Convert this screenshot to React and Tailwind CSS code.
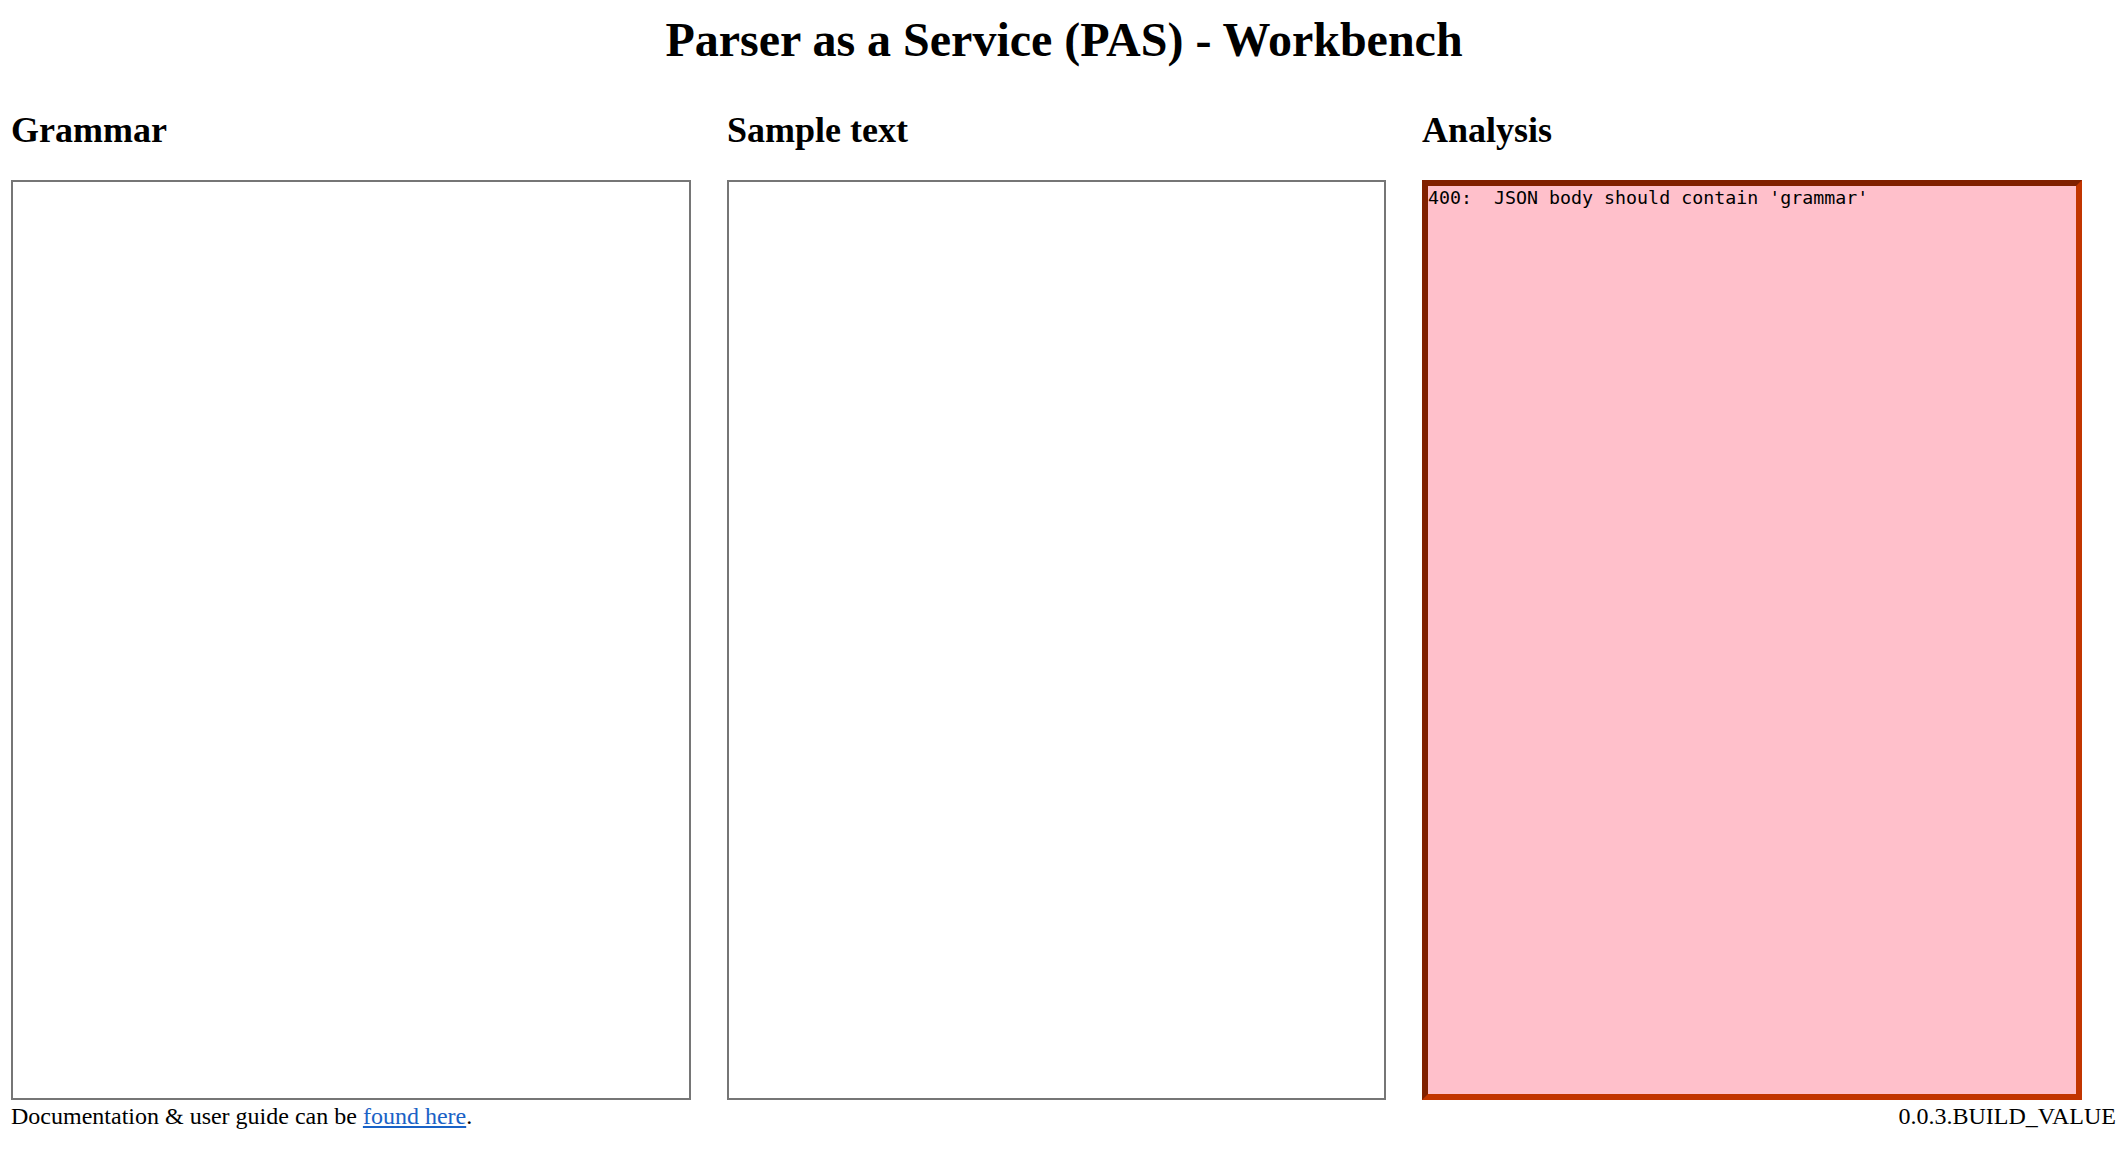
const serif = "font-['Liberation_Serif','Times_New_Roman',serif]";

const Panel = ({ title, width, children }) => (
  <section className="flex flex-col" style={{ width }}>
    <h2 className="text-[36px] font-bold leading-[40px]">{title}</h2>
    <div className="mt-[30px] h-[920px]">{children}</div>
  </section>
);

const EmptyArea = ({ label }) => (
  <textarea
    aria-label={label}
    className="block h-full w-full resize-none border-2 border-[#767676] bg-white outline-none"
    defaultValue=""
  />
);

export default function App() {
  return (
    <div className={`min-h-screen bg-white text-black ${serif}`}>
      <h1 className="pt-[13px] text-center text-[48px] font-bold leading-[53px]">
        Parser as a Service (PAS) - Workbench
      </h1>

      <div className="mt-[44px] flex gap-[36px] pl-[11px]">
        <Panel title="Grammar" width={680}>
          <EmptyArea label="Grammar" />
        </Panel>

        <Panel title="Sample text" width={659}>
          <EmptyArea label="Sample text" />
        </Panel>

        <Panel title="Analysis" width={660}>
          <div className="h-full w-full border-[6px] border-t-[#802000] border-l-[#802000] border-b-[#c23500] border-r-[#c23500] bg-[#ffc0cb]">
            <pre className="whitespace-pre pt-px font-['DejaVu_Sans_Mono',monospace] text-[18.3px] leading-[21px]">
              400:  JSON body should contain 'grammar'
            </pre>
          </div>
        </Panel>
      </div>

      <footer className="flex items-start justify-between pl-[11px] pr-[12px] pt-[3px] text-[24px] leading-[27px]">
        <p>
          Documentation &amp; user guide can be{" "}
          <a href="#" className="text-[#1a62c6] underline">
            found here
          </a>
          .
        </p>
        <span>0.0.3.BUILD_VALUE</span>
      </footer>
    </div>
  );
}
